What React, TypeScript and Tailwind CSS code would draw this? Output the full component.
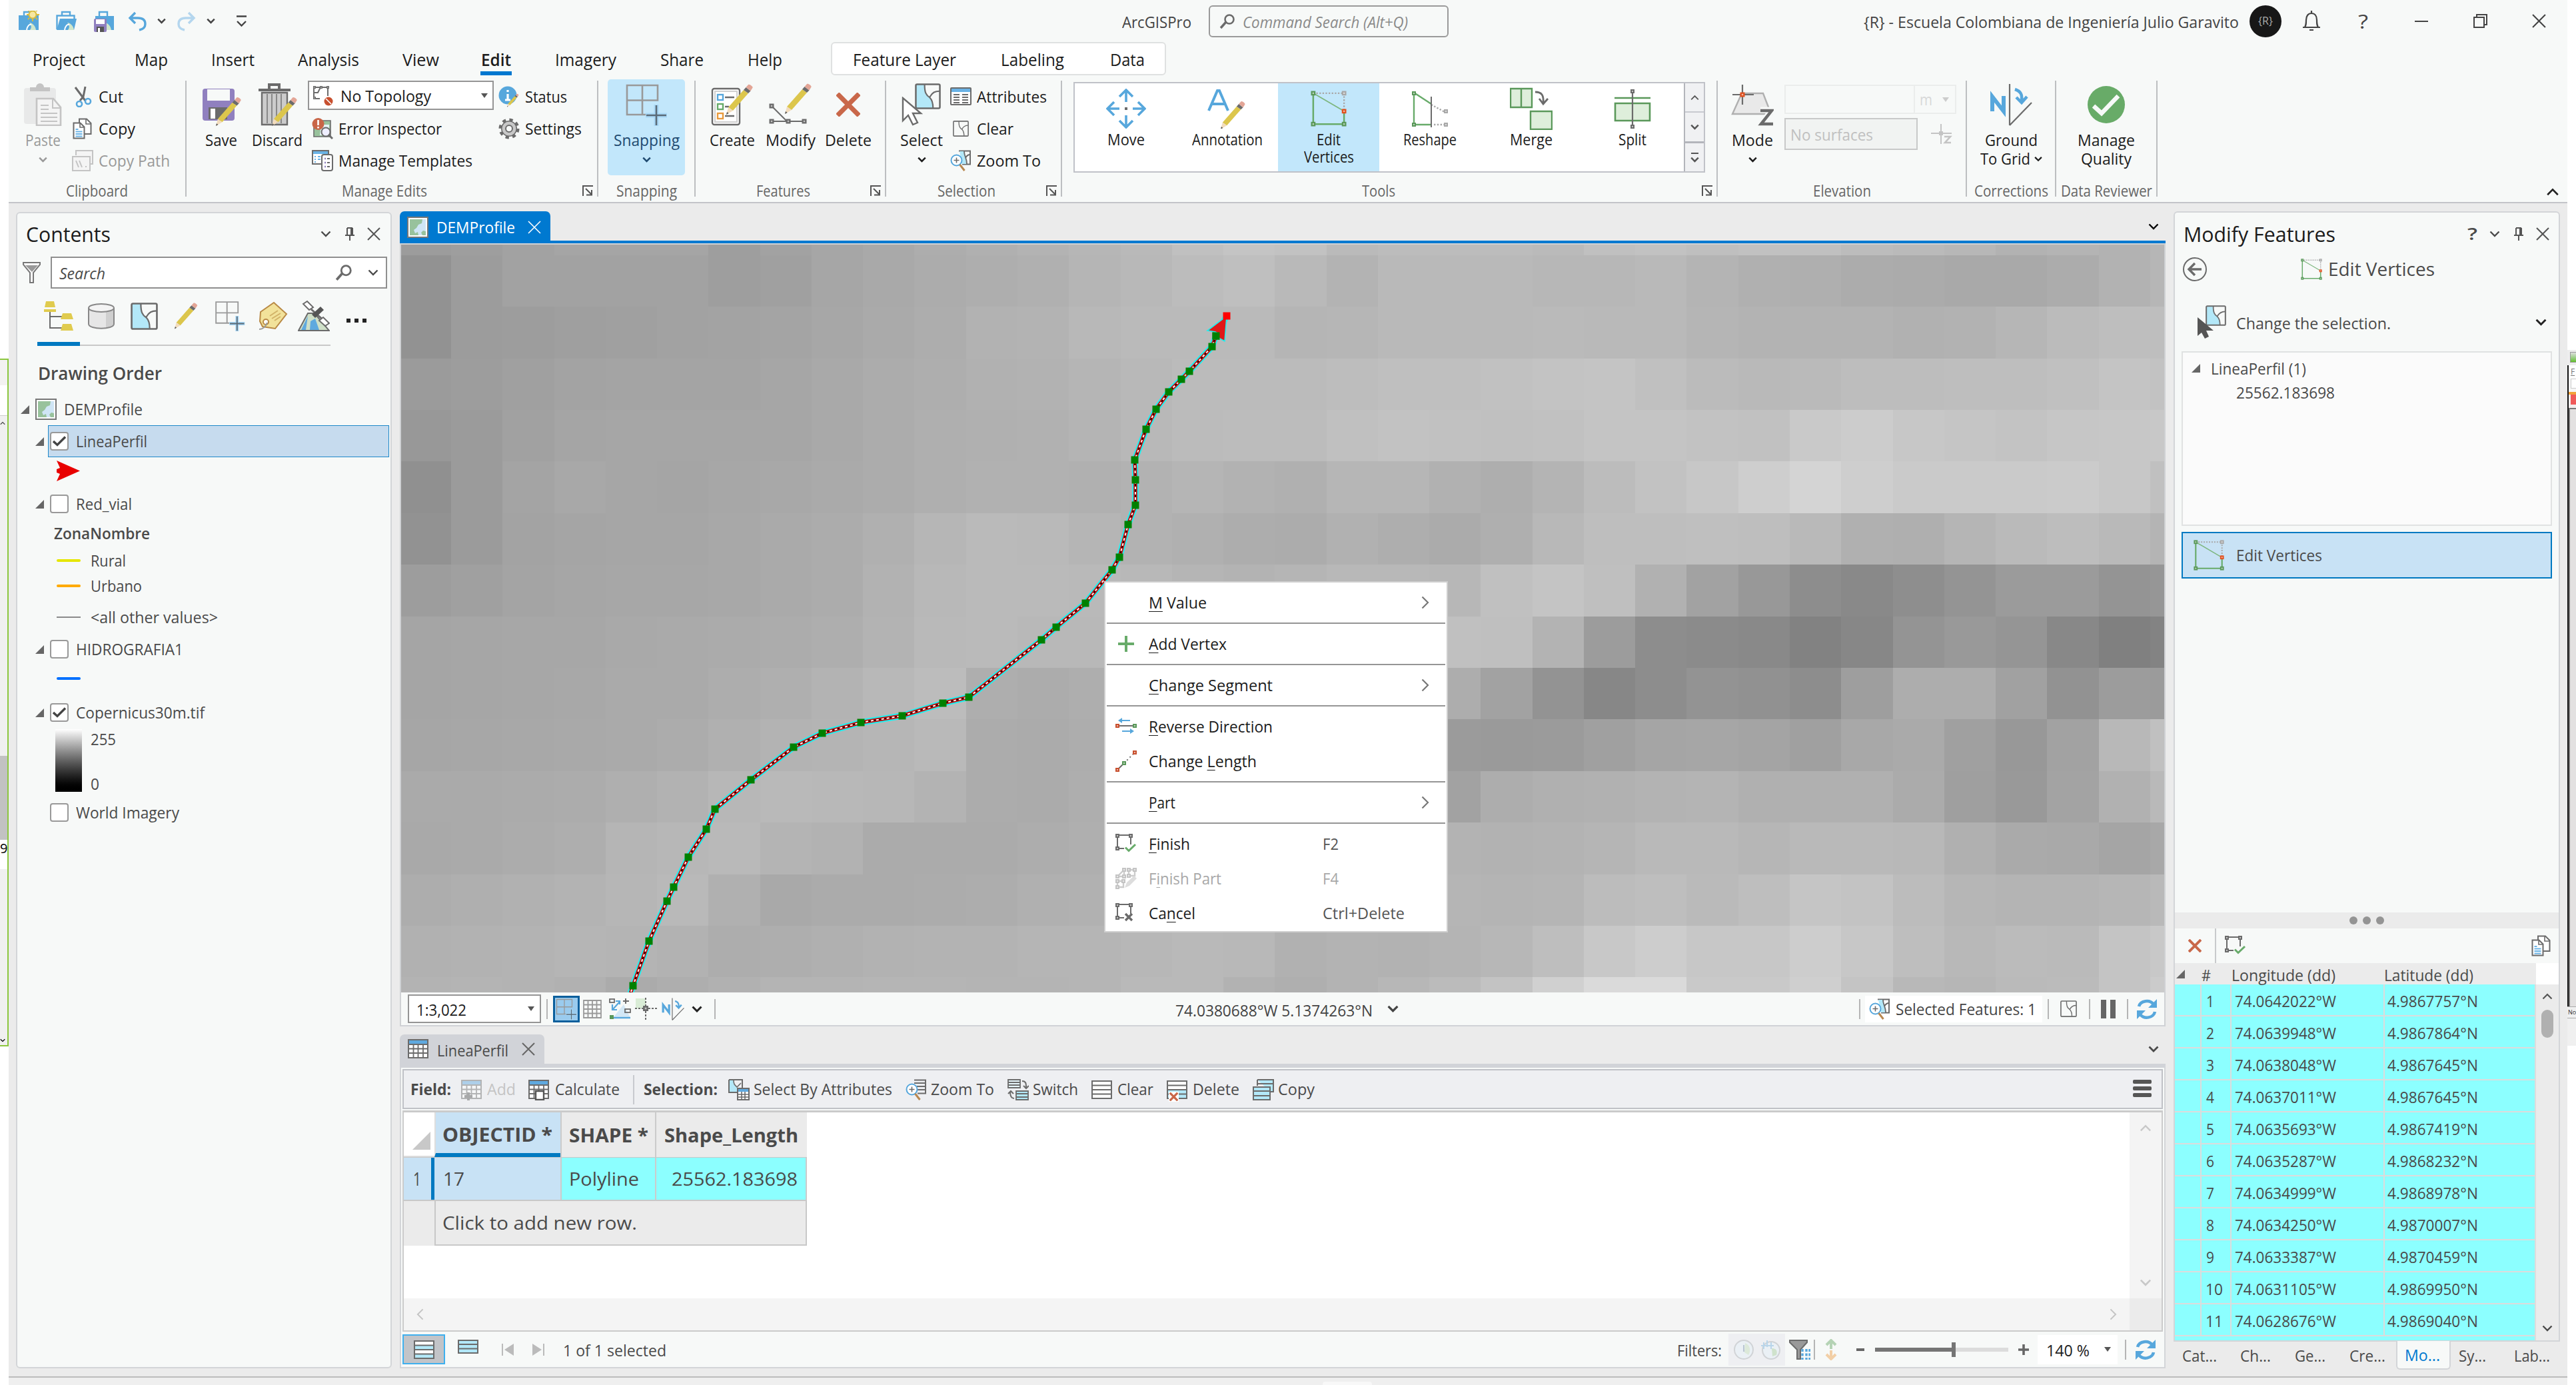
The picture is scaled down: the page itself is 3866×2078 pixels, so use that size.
import React, { useLayoutEffect, useRef } from "react";

type Kids = { children?: React.ReactNode };

/* Text fitted horizontally to the width given by its class. */
function T({ c, children }: { c: string } & Kids) {
  const outer = useRef<HTMLSpanElement>(null);
  const inner = useRef<HTMLSpanElement>(null);
  useLayoutEffect(() => {
    const o = outer.current, i = inner.current;
    if (!o || !i) return;
    i.style.transform = "none";
    const w = i.getBoundingClientRect().width;
    if (w > 0) i.style.transform = `scaleX(${o.clientWidth / w})`;
  });
  return (
    <span ref={outer} className={"inline-block shrink-0 whitespace-nowrap " + c}>
      <span ref={inner} className="inline-block origin-left">{children}</span>
    </span>
  );
}

function Svg({ c = "size-8", vb = "0 0 32 32", children }: { c?: string; vb?: string } & Kids) {
  return <svg className={"block shrink-0 " + c} viewBox={vb} fill="none">{children}</svg>;
}

/* ---------- glyphs ---------- */
const G = "#6b6b6b";
const Chev = ({ c = "w-3 h-2 text-[#555]", w = 2.4 }: { c?: string; w?: number }) => (
  <svg className={"block shrink-0 " + c} viewBox="0 0 16 10" fill="none"><path d="M1.5 1.5 8 8l6.5-6.5" stroke="currentColor" strokeWidth={w} /></svg>
);
const ChevUp = ({ c }: { c: string }) => (
  <svg className={"block shrink-0 " + c} viewBox="0 0 16 10" fill="none"><path d="M1.5 8.5 8 2l6.5 6.5" stroke="currentColor" strokeWidth="2.2" /></svg>
);
const ChevR = ({ c }: { c: string }) => (
  <svg className={"block shrink-0 " + c} viewBox="0 0 12 20" fill="none"><path d="M1.5 1.5 10 10l-8.500 8.500" stroke="currentColor" strokeWidth="2.2" /></svg>
);
const Tri = ({ c = "w-[10px] h-[7px] text-[#555]" }: { c?: string }) => (
  <svg className={"block shrink-0 " + c} viewBox="0 0 10 7"><path d="M0 0h10L5 7z" fill="currentColor" /></svg>
);
const Close = ({ c = "size-5 text-[#555]", w = 2 }: { c?: string; w?: number }) => (
  <svg className={"block shrink-0 " + c} viewBox="0 0 20 20" fill="none"><path d="M1 1l18 18M19 1 1 19" stroke="currentColor" strokeWidth={w} /></svg>
);
const Pin = () => (
  <Svg c="w-[16px] h-[20px]" vb="0 0 16 20"><path d="M4 1h8M4 1v11M12 1v11M10 1v11M1 12h14M8 12v8" stroke="#555" strokeWidth="2" /></Svg>
);
const Mag = ({ c = "size-6" }: { c?: string }) => (
  <Svg c={c} vb="0 0 24 24"><circle cx="15" cy="9" r="6.500" stroke={G} strokeWidth="2.600" /><path d="M10 13 2 22" stroke={G} strokeWidth="3.400" /></Svg>
);
const Launcher = () => (
  <Svg c="size-4" vb="0 0 16 16"><path d="M1 16V1h15M5 5l9 9M14 7v7.500H6" stroke="#555" strokeWidth="2" /></Svg>
);
const Pencil = ({ x = 0, y = 0, s = 1 }: { x?: number; y?: number; s?: number }) => (
  <g transform={`translate(${x} ${y}) scale(${s})`}>
    <path d="M3 29 26 3l7 5L10 34z" fill="#dcc64c" />
    <path d="M26 3l3.500-4 7 5.500L33 8z" fill="#6b6b6b" />
    <path d="M29.500-1 33-5c1.500-1.600 7.500 2.800 6.500 4.600L36.500 4.500z" fill="#e3a596" />
    <path d="M3 29 0 40l10-6z" fill="#f2dcbd" /><path d="M1 36 0 40l3.600-2z" fill="#555" />
  </g>
);
const Node = ({ x, y, f = "#5a985a", s = 8 }: { x: number; y: number; f?: string; s?: number }) => (
  <g><rect x={x - s / 2} y={y - s / 2} width={s} height={s} fill={f} /><rect x={x - s / 6} y={y - s / 6} width={s / 3} height={s / 3} fill="#fff" opacity=".6" /></g>
);
const EditVerticesIcon = ({ c = "size-14" }: { c?: string }) => (
  <Svg c={c} vb="0 0 56 56">
    <path d="M4 4h48v28" stroke="#a8a8a8" strokeWidth="2.400" strokeDasharray="2.400 2.400" />
    <path d="M4 4v48h48V32" stroke="#68ab6a" strokeWidth="2.600" /><path d="M4 4l48 28" stroke="#7db67e" strokeWidth="1.800" />
    <Node x={4} y={4} s={7} /><Node x={52} y={4} f="#a8a8a8" s={7} /><Node x={4} y={52} s={7} /><Node x={52} y={52} s={7} /><Node x={52} y={32} f="#e2501f" s={7} />
  </Svg>
);
const LayerBox = ({ c = "size-8", fill = true }: { c?: string; fill?: boolean }) => (
  <Svg c={c} vb="0 0 40 40">
    {fill && <path d="M2 2h13c0 12 2 16 8 20 4 4 5 9 5 16H2z" fill="#b3e8f8" />}
    <rect x="1.500" y="1.500" width="37" height="37" rx="2" stroke={G} strokeWidth="2.600" />
    <path d="M15 2c0 12 2 16 8 20 4 4 5 9 5 16M23 21c4-7 8-9 15-9" stroke={G} strokeWidth="2.200" />
  </Svg>
);
const ZoomLayer = ({ rows = false }: { rows?: boolean }) => (
  <Svg>
    <path d="M13 1.500h17v20H18" stroke={G} strokeWidth="2" />
    {rows ? <path d="M13 6h17M17 11h13M18 16h12" stroke={G} strokeWidth="2" /> : <><path d="M14 2h7c0 8 3 10 3 19h-6z" fill="#b3e8f8" /><path d="M21 2c0 8 4 10 4 19M23 12c2-4 4-5 7-5" stroke={G} strokeWidth="1.800" /></>}
    <circle cx="9.500" cy="15.500" r="8" fill="#fff" stroke="#57a7dc" strokeWidth="2" />
    <path d="M9.500 11.500v8M5.500 15.500h8" stroke={G} strokeWidth="1.600" /><path d="M14.500 22l7 9" stroke="#b98850" strokeWidth="3" />
  </Svg>
);
const SnapIcon = ({ c }: { c: string }) => (
  <Svg c={c} vb="0 0 64 64">
    <path d="M3 3h46v22.500H3zM26 3v44M3 25v22h28" stroke="#999" strokeWidth="2.600" />
    <path d="M47 32v32M31 48h32" stroke="#a9d8f6" strokeWidth="7" /><path d="M47 33v30M32 48h30" stroke="#5b6b78" strokeWidth="2.600" />
  </Svg>
);
const CopyIcon = () => (
  <Svg>
    <path d="M11 9V1.500h11l6.500 6.500v16H19" fill="#fff" stroke={G} strokeWidth="2" /><path d="M21 2v7h7" stroke={G} strokeWidth="1.600" />
    <path d="M2.500 7.500h10l6 6v17h-16z" fill="#fff" stroke={G} strokeWidth="2" /><path d="M12 8v6h6" stroke={G} strokeWidth="1.600" />
    <path d="M5.500 17h4M5.500 20.500h10M5.500 24h10M5.500 27.500h10" stroke="#6ab3e6" strokeWidth="2" />
  </Svg>
);
const MapThumb = () => (
  <Svg c="size-8"><rect x="1" y="1" width="30" height="30" fill="#fff" stroke="#777" strokeWidth="2" /><path d="M4 4h24v24H4z" fill="#98c29c" /><path d="M23 4h5v18l-4-1-3 3 2 4h-6l-1-5-4 2-2-5 4-3 3-5 5-2z" fill="#cfe5f5" /></Svg>
);
const FinishIcon = ({ x = false, c = "size-8" }: { x?: boolean; c?: string }) => (
  <Svg c={c}>
    <path d="M3 3h20v14M3 3v20h10" stroke={G} strokeWidth="2" />
    <Node x={3} y={4} f={G} s={6} /><Node x={23} y={4} f={G} s={6} /><Node x={3} y={23} f={G} s={6} />
    {x ? <path d="M15 17l10 10M25 17 15 27" stroke={G} strokeWidth="3.400" /> : <path d="M15 21.500l5 5 10-9.500" stroke="#68ab6a" strokeWidth="3" />}
  </Svg>
);
const Refresh = () => (
  <Svg>
    <path d="M4 12A12 10 0 0 1 26 9M28 20A12 10 0 0 1 6 24" stroke="#57a7dc" strokeWidth="4.500" />
    <path d="M31 1v13H18zM1 31V18h13z" fill="#57a7dc" />
  </Svg>
);
const NArrow = ({ c = "size-8" }: { c?: string }) => (
  <Svg c={c} vb="0 0 64 64">
    <path d="M30 1v62M30 63 63 29" stroke={G} strokeWidth="2.200" />
    <path d="M4 42V20h0l17 22V19" stroke="#57a7dc" strokeWidth="6" /><path d="M38 9c9 3 11 8 10 17M40 21l8 8 8-9" stroke="#57a7dc" strokeWidth="4.500" />
  </Svg>
);
const TableRows = ({ sel = [] as number[], c = "w-[31px] h-[28px]" }) => (
  <Svg c={c} vb="0 0 31 28">
    <rect x="1" y="1" width="29" height="26" fill="#fff" />
    {sel.map((r) => <rect key={r} x="1" y={1 + r * 6.500} width="29" height="6.500" fill="#b3e8f8" />)}
    <path d="M1 7.500h29M1 14h29M1 20.500h29" stroke={G} strokeWidth="1.800" /><rect x="1" y="1" width="29" height="26" stroke={G} strokeWidth="2" />
  </Svg>
);
const GridTable = ({ extra }: Kids & { extra?: React.ReactNode }) => (
  <Svg>
    <rect x="1" y="3" width="29" height="26" fill="#fff" /><rect x="1" y="2" width="29" height="7" fill="#5fa9df" />
    <path d="M1 9h29M1 15.500h29M1 22h29M8.500 9v20M15.500 9v20M23 9v20" stroke={G} strokeWidth="1.800" /><rect x="1" y="2" width="29" height="27" stroke={G} strokeWidth="2" />{extra}
  </Svg>
);

/* ---------- title bar ---------- */
const Proj = ({ k }: { k: number }) => (
  <Svg>
    <path d="M9 8V2h12v6" stroke="#57a7dc" strokeWidth="2.400" />
    {k === 0 && <path d="M1 7h30v22H1z" fill="#57a7dc" />}
    {k === 1 && <><path d="M1.500 28V7.500h26V13" stroke="#57a7dc" strokeWidth="2.400" /><path d="M6 12h25l-4 17H1z" fill="#57a7dc" /></>}
    {k === 2 && <path d="M3 8h28v21H3z" fill="#57a7dc" />}
    <path d="M17 18c4 0 9 4 10 11h-9c3-4 2-7-1-11z" fill="#cfe6cb" /><path d="M13 29c1-6 4-9 7-8" stroke="#fff" strokeWidth="2" />
    {k === 0 && <><circle cx="22" cy="6" r="5.500" fill="#f7e7a0" stroke="#d9bc3c" strokeWidth="2" /><path d="M22-2v3M22 12v4M13 6h3M28 6h4M15-1l2 2M27 11l2 2M29-1l-2 2M15 13l2-2" stroke="#d9bc3c" strokeWidth="2" /></>}
    {k === 2 && <><rect x="1" y="12" width="19" height="20" rx="2" fill="#9080bf" /><path d="M4 13h13v7H4z" fill="#fff" /><path d="M5 24h11v8H5z" fill="#555" /><path d="M7 26h3v6H7z" fill="#fff" /></>}
  </Svg>
);
const Undo = ({ c, flip }: { c: string; flip?: boolean }) => (
  <svg className={"block shrink-0 w-[30px] h-[30px] " + c + (flip ? " -scale-x-100" : "")} viewBox="0 0 30 30" fill="none"><path d="M11 2 3 10l8 8M4 10h11c8 0 11 4 11 9s-4 8-9 9" stroke="currentColor" strokeWidth="3.400" /></svg>
);

function TitleBar() {
  return (
    <div className="flex h-[62px] items-center pt-px text-[25px] text-[#444]">
      <div className="ml-[14px]"><Proj k={0} /></div>
      <div className="ml-[25px]"><Proj k={1} /></div>
      <div className="ml-[24px]"><Proj k={2} /></div>
      <div className="ml-[20px]"><Undo c="text-[#57a7dc]" /></div>
      <div className="ml-[14px]"><Chev c="w-[13px] h-[9px] text-[#444]" w={3} /></div>
      <div className="ml-[15px]"><Undo c="text-[#b4d6ee]" flip /></div>
      <div className="ml-[16px]"><Chev c="w-[13px] h-[9px] text-[#444]" w={3} /></div>
      <Svg c="ml-[32px] w-[15px] h-[18px]" vb="0 0 15 18"><path d="M0 1.500h15M1 9l6.500 6.500L14 9" stroke="#444" strokeWidth="2.400" /></Svg>
      <T c="ml-[1314px] w-[104px] pt-[2px] text-[24px]">ArcGISPro</T>
      <div className="ml-[26px] flex h-[48px] w-[360px] shrink-0 items-center rounded-[6px] border-2 border-[#9a9a9a]">
        <div className="ml-[14px]"><Mag c="w-6 h-6" /></div>
        <T c="ml-[11px] w-[248px] pt-[2px] text-[24px] italic text-[#8a8a8a]">Command Search (Alt+Q)</T>
      </div>
      <T c="ml-[623px] w-[563px] pt-[2px] text-[24px]">{"{R} - Escuela Colombiana de Ingeniería Julio Garavito"}</T>
      <div className="ml-[16px] flex size-12 shrink-0 items-center justify-center rounded-full bg-[#171717] text-[16px] text-[#aaa]">{"{R}"}</div>
      <Svg c="ml-[30px] w-[30px] h-[34px]" vb="0 0 30 34"><path d="M2 26h26M5 26c2-4 2-5 2-11 0-6 3-10 8-10s8 4 8 10c0 6 0 7 2 11M15 5V1M12 30h6" stroke="#444" strokeWidth="2.200" /></Svg>
      <T c="ml-[55px] w-[15px] text-[30px]">?</T>
      <div className="ml-[70px] h-[2px] w-[20px] bg-[#444]" />
      <Svg c="ml-[68px] size-[21px]" vb="0 0 21 21"><path d="M5 5V1h15v15h-4M1 5h15v15H1z" stroke="#444" strokeWidth="2" /></Svg>
      <div className="ml-[67px]"><Close c="size-[21px] text-[#444]" /></div>
    </div>
  );
}

function Tabs() {
  return (
    <div className="flex h-[52px] items-center text-[26px] text-[#1c1c1c]">
      <T c="ml-[36px] w-[79px] pt-[4px]">Project</T>
      <T c="ml-[74px] w-[50px] pt-[4px]">Map</T>
      <T c="ml-[65px] w-[65px] pt-[4px]">Insert</T>
      <T c="ml-[65px] w-[92px] pt-[4px]">Analysis</T>
      <T c="ml-[65px] w-[55px] pt-[4px]">View</T>
      <div className="relative ml-[62px] flex h-full w-[47px] shrink-0 items-center">
        <T c="ml-[1px] w-[45px] pt-[4px] font-semibold">Edit</T>
        <div className="absolute bottom-[1px] left-0 h-[6px] w-[47px] bg-[#0078d0]" />
      </div>
      <T c="ml-[65px] w-[92px] pt-[4px]">Imagery</T>
      <T c="ml-[66px] w-[65px] pt-[4px]">Share</T>
      <T c="ml-[66px] w-[52px] pt-[4px]">Help</T>
      <div className="ml-[73px] flex h-[50px] w-[503px] shrink-0 items-center rounded-[6px] border-2 border-[#dfe1e1] bg-white">
        <T c="ml-[31px] w-[155px] pt-[4px]">Feature Layer</T>
        <T c="ml-[67px] w-[95px] pt-[4px]">Labeling</T>
        <T c="ml-[69px] w-[52px] pt-[4px]">Data</T>
      </div>
    </div>
  );
}

/* ---------- ribbon ---------- */
function Group({ c, label, lc, launcher = true, children }: { c: string; label: string; lc: string; launcher?: boolean } & Kids) {
  return (
    <div className={"flex shrink-0 flex-col " + c}>
      <div className="flex h-[154px] items-start">{children}</div>
      <div className="flex h-[34px] items-center">
        <div className="flex flex-1 justify-center pt-[2px] text-[#666]"><T c={lc}>{label}</T></div>
        {launcher && <div className="mr-[6px] pt-[2px]"><Launcher /></div>}
      </div>
    </div>
  );
}
const Sep = () => <div className="mt-[7px] h-[174px] w-[2px] shrink-0 bg-[#bdbfc1]" />;
function Big({ c, icon, lc, label, chev, extra }: { c: string; icon: React.ReactNode; lc: string; label: string; chev?: boolean; extra?: React.ReactNode }) {
  return (
    <div className={"mt-[5px] flex h-[144px] shrink-0 flex-col items-center pt-[6px] " + c}>
      <div className="flex h-16 items-center justify-center">{icon}</div>
      <div className="mt-[5px] flex h-[32px] items-center"><T c={lc}>{label}</T></div>
      {chev && <div className="mt-[9px]"><Chev c="w-[13px] h-[9px]" w={3} /></div>}
      {extra}
    </div>
  );
}
function Small({ icon, tc, label, c = "" }: { icon: React.ReactNode; tc: string; label: string; c?: string }) {
  return <div className={"flex h-[48px] items-center " + c}><div className="flex w-8 shrink-0 justify-center">{icon}</div><T c={"ml-[8px] " + tc}>{label}</T></div>;
}
function Tool({ icon, lines, on, w }: { icon: React.ReactNode; lines: string[]; w: string[]; on?: boolean }) {
  return (
    <div className={"flex w-[152px] shrink-0 flex-col items-center pt-[6px] " + (on ? "bg-[#c2e7fb]" : "")}>
      <div className="flex h-16 items-center justify-center">{icon}</div>
      <div className="flex flex-col items-center pt-[2px]">
        {lines.map((l, i) => <div key={l} className="flex h-[26px] items-center"><T c={w[i]}>{l}</T></div>)}
      </div>
    </div>
  );
}

function Ribbon() {
  return (
    <div className="flex h-[189px] text-[24px] text-[#1c1c1c]">
      <Group c="w-[265px]" label="Clipboard" lc="w-[93px]" launcher={false}>
        <Big c="ml-[19px] w-[64px] text-[#999]" lc="w-[53px]" label="Paste" chev icon={
          <Svg c="w-[58px] h-16" vb="0 0 58 64"><rect x="1" y="7" width="48" height="54" rx="4" fill="#e8e9e9" /><path d="M10 12V6h9a6 6 0 0 1 12 0h9v6z" fill="#c4c4c4" /><path d="M20 23h25l11 13v27H20z" fill="#f4f4f4" stroke="#c4c4c4" strokeWidth="2.600" /><path d="M44 23v14h12M26 33h12M26 39h12M26 45h25M26 51h25M26 57h25" stroke="#c4c4c4" strokeWidth="2" /></Svg>} />
        <div className="ml-[12px] mt-[7px] flex flex-col">
          <Small tc="w-[37px]" label="Cut" icon={<Svg><path d="M5 2l15 20M20 1l-3 15-5 6" stroke={G} strokeWidth="3" /><circle cx="24" cy="23" r="4" stroke="#57a7dc" strokeWidth="2.600" /><circle cx="11" cy="27" r="4" stroke="#57a7dc" strokeWidth="2.600" /></Svg>} />
          <Small tc="w-[55px]" label="Copy" icon={<CopyIcon />} />
          <Small c="text-[#999]" tc="w-[107px]" label="Copy Path" icon={<Svg><path d="M6 8V1h25v20h-3" fill="#f4f4f4" stroke="#c4c4c4" strokeWidth="2" /><rect x="1" y="10" width="26" height="21" fill="#f4f4f4" stroke="#c4c4c4" strokeWidth="2" /><path d="M6 16l4 10M11 16l4 10M20 25h2" stroke="#c4c4c4" strokeWidth="2" /></Svg>} />
        </div>
      </Group>
      <Sep />
      <Group c="w-[616px]" label="Manage Edits" lc="w-[128px]">
        <Big c="ml-[20px] w-[64px]" lc="w-[48px]" label="Save" icon={
          <Svg c="size-16" vb="0 0 64 64"><rect x="4" y="8" width="48" height="48" rx="4" fill="#9080bf" /><path d="M11 9h34v17H11z" fill="#f7f9f8" /><path d="M13 36h28v18H13z" fill="#6b6b6b" /><path d="M16 38h7v15h-7z" fill="#fff" /><Pencil x={24} y={26} s={0.95} /></Svg>} />
        <Big c="ml-[12px] w-[80px]" lc="w-[76px]" label="Discard" icon={
          <Svg c="size-16" vb="0 0 64 64"><path d="M4 10h48M20 9V2h15v7" stroke="#6b6b6b" strokeWidth="4" /><path d="M9 14h38v48H9z" fill="#ccc" stroke="#6b6b6b" strokeWidth="2.400" /><path d="M17 16v44M24 16v44M31 16v44M38 16v44" stroke="#888" strokeWidth="2" /><Pencil x={24} y={26} s={0.95} /></Svg>} />
        <div className="ml-[6px] mt-[7px] flex shrink-0 flex-col">
          <div className="flex h-[48px] items-start">
            <div className="flex h-[44px] w-[279px] items-center border-[2px] border-[#959595] bg-white">
              <div className="ml-[5px]"><Svg><path d="M2 4h21M2 4v17h9M2 12h6l4-8M23 4v13" stroke={G} strokeWidth="2" /><Node x={3} y={4} f={G} s={4} /><Node x={13} y={4} f={G} s={4} /><Node x={23} y={4} f={G} s={4} /><Node x={3} y={20} f={G} s={4} /><circle cx="24" cy="25" r="6.500" fill="#c8502f" /><path d="M20 21l8 8" stroke="#fff" strokeWidth="1.600" /></Svg></div>
              <T c="ml-[10px] w-[136px] pt-[2px]">No Topology</T>
              <div className="ml-[75px]"><Tri /></div>
            </div>
          </div>
          <Small c="ml-[6px]" tc="w-[155px]" label="Error Inspector" icon={<Svg><path d="M6 4h22v24H3V14z" fill="#98c29c" stroke={G} strokeWidth="1.600" /><path d="M14 10h12v16H12z" fill="#e5f2f5" /><circle cx="9.500" cy="9" r="9" fill="#c86547" /><path d="M9.500 3v8M9.500 13v2.500" stroke="#fff" strokeWidth="2.600" /><circle cx="21" cy="21" r="6.500" fill="#eef" stroke={G} strokeWidth="2" /><path d="M25 25l6 6" stroke={G} strokeWidth="3" /></Svg>} />
          <Small c="ml-[6px]" tc="w-[201px]" label="Manage Templates" icon={<Svg><path d="M1 1h24v20H1z" fill="#fff" stroke={G} strokeWidth="2" /><path d="M2 2h22v4H2z" fill="#6ab3e6" /><path d="M4 10h2M4 14h2M4 18h2M9 10h4M9 14h4" stroke="#6ab3e6" strokeWidth="2" /><rect x="15" y="7" width="16" height="24" rx="3" fill="#fff" stroke={G} strokeWidth="2" /><path d="M19 13h2M19 19h2M19 25h2" stroke="#9080bf" strokeWidth="2.600" /><path d="M23 13h4M23 19h4M23 25h4" stroke={G} strokeWidth="2" /></Svg>} />
        </div>
        <div className="ml-[7px] mt-[7px] flex shrink-0 flex-col">
          <Small tc="w-[63px]" label="Status" icon={<Svg><circle cx="14" cy="14" r="13.500" fill="#57a7dc" /><path d="M14 6v3M14 12v10M10 21h8" stroke="#fff" strokeWidth="3.200" /><Pencil x={13} y={14} s={0.44} /></Svg>} />
          <Small tc="w-[85px]" label="Settings" icon={<Svg><circle cx="16" cy="16" r="8" stroke={G} strokeWidth="2" /><circle cx="16" cy="16" r="12.500" stroke={G} strokeWidth="6" strokeDasharray="4.900 4.920" /><circle cx="16" cy="16" r="11" stroke={G} strokeWidth="2" /><circle cx="16" cy="16" r="8" stroke="#c8c8c8" strokeWidth="5" /><circle cx="16" cy="16" r="5" fill="#f7f9f8" stroke={G} strokeWidth="2" /></Svg>} />
        </div>
      </Group>
      <Sep />
      <Group c="w-[144px]" label="Snapping" lc="w-[91px]" launcher={false}>
        <Big c="ml-[14px] w-[116px] rounded-[5px] bg-[#c2e7fb] text-[#1f4a70]" lc="w-[99px]" label="Snapping" chev icon={<SnapIcon c="size-16" />} />
      </Group>
      <Sep />
      <Group c="w-[284px]" label="Features" lc="w-[81px]">
        <Big c="ml-[19px] w-[72px]" lc="w-[68px]" label="Create" icon={
          <Svg c="size-16" vb="0 0 64 64"><rect x="2" y="8" width="41" height="54" rx="3" fill="#fff" stroke={G} strokeWidth="2.400" /><path d="M6 12h33v46H6z" stroke="#d0d0d0" strokeWidth="2" /><rect x="10" y="17" width="8" height="8" stroke="#57a7dc" strokeWidth="2.400" /><rect x="10" y="31" width="8" height="8" stroke="#68ab6a" strokeWidth="2.400" /><rect x="10" y="45" width="8" height="8" stroke="#e89a3c" strokeWidth="2.400" /><path d="M21 21h14M21 35h6M21 49h14" stroke={G} strokeWidth="2.400" /><Pencil x={23} y={7} /></Svg>} />
        <Big c="ml-[13px] w-[76px]" lc="w-[75px]" label="Modify" icon={
          <Svg c="size-16" vb="0 0 64 64"><path d="M4 34l24 24M4 57h52" stroke={G} strokeWidth="2" /><Node x={4} y={34} f={G} s={7} /><Node x={4} y={57} f={G} s={7} /><Node x={29} y={57} f={G} s={7} /><Node x={53} y={57} f={G} s={7} /><Pencil x={24} y={6} /></Svg>} />
        <Big c="ml-[14px] w-[70px]" lc="w-[70px]" label="Delete" icon={<Close c="size-[36px] text-[#c9684a]" w={4} />} />
      </Group>
      <Sep />
      <Group c="w-[262px]" label="Selection" lc="w-[87px]">
        <Big c="ml-[20px] w-[66px]" lc="w-[64px]" label="Select" chev icon={
          <div className="relative h-16 w-[60px]"><div className="ml-[20px]"><LayerBox c="size-[39px]" /></div><Svg c="absolute left-0 top-[20px] w-[32px] h-[44px]" vb="0 0 32 44"><path d="M2 2v34l8-8 7 14 7-3-7-14h12z" fill="#fff" stroke={G} strokeWidth="2.400" /></Svg></div>} />
        <div className="ml-[10px] mt-[7px] flex shrink-0 flex-col">
          <Small tc="w-[105px]" label="Attributes" icon={<Svg><rect x="1" y="3" width="30" height="25" rx="1" fill="#fff" stroke={G} strokeWidth="2" /><path d="M2 4h28v5H2z" fill="#6ab3e6" /><path d="M5 13h9M5 17h9M5 21h9M5 25h9M18 13h9M18 17h9M18 21h9M18 25h9" stroke={G} strokeWidth="1.800" /></Svg>} />
          <Small tc="w-[55px]" label="Clear" icon={<LayerBox c="size-[24px]" fill={false} />} />
          <Small tc="w-[96px]" label="Zoom To" icon={<ZoomLayer />} />
        </div>
      </Group>
      <Sep />
      <Group c="w-[982px]" label="Tools" lc="mr-[10px] w-[50px]">
        <div className="ml-[17px] mt-[9px] flex h-[136px] w-[948px] shrink-0 border-2 border-[#c0c2c8] bg-white pl-px text-[23px]">
          <Tool lines={["Move"]} w={["w-[56px]"]} icon={<Svg c="size-[60px]" vb="0 0 60 60"><path d="M30 2v18M30 40v18M2 30h18M40 30h18M20 12 30 2l10 10M20 48l10 10 10-10M12 20 2 30l10 10M48 20l10 10-10 10" stroke="#57a7dc" strokeWidth="3.600" /><path d="M28 28h4v4h-4z" fill={G} /></Svg>} />
          <Tool lines={["Annotation"]} w={["w-[106px]"]} icon={<Svg c="size-[60px]" vb="0 0 60 60"><path d="M2 33 15 3h3l13 30M7 23h19" stroke="#57a7dc" strokeWidth="4" /><Pencil x={20} y={24} s={0.92} /></Svg>} />
          <Tool on lines={["Edit", "Vertices"]} w={["w-[36px]", "w-[75px]"]} icon={<EditVerticesIcon c="size-[54px]" />} />
          <Tool lines={["Reshape"]} w={["w-[80px]"]} icon={<Svg c="w-[56px] h-[56px]" vb="0 0 56 56"><path d="M4 52V4l26 17M4 52h26" stroke="#68ab6a" strokeWidth="2.400" /><path d="M30 22l22 12M34 52h18" stroke="#a8a8a8" strokeWidth="2.400" strokeDasharray="2.400 2.400" /><path d="M30 10v50" stroke={G} strokeWidth="2" /><Node x={4} y={5} s={6} /><Node x={4} y={52} s={6} /><Node x={52} y={32} f="#a8a8a8" s={6} /><Node x={52} y={52} f="#a8a8a8" s={6} /></Svg>} />
          <Tool lines={["Merge"]} w={["w-[64px]"]} icon={<Svg c="size-16" vb="0 0 64 64"><path d="M1 2h32v28H1zM17 2v28M31 36h32v27H31z" fill="#deeedb" stroke="#5a985a" strokeWidth="2.400" /><path d="M38 7c10 0 13 5 12 17M44 17l6 8 7-8" stroke={G} strokeWidth="2.800" /></Svg>} />
          <Tool lines={["Split"]} w={["w-[42px]"]} icon={<Svg c="size-[60px]" vb="0 0 60 60"><path d="M3 14h54" stroke="#5a985a" strokeWidth="2.600" /><path d="M4 22h52v26H4z" fill="#deeedb" stroke="#5a985a" strokeWidth="2.600" /><path d="M30 4v52" stroke={G} strokeWidth="2.200" /><Node x={30} y={4} f={G} s={6} /><Node x={30} y={57} f={G} s={6} /></Svg>} />
          <div className="ml-px flex flex-1 flex-col border-l-2 border-[#b3b5bb] bg-[#f0f1f3] text-[#555]">
            <div className="flex h-[44px] items-center justify-center border-b-2 border-[#c8cad0]"><ChevUp c="w-[13px] h-[9px]" /></div>
            <div className="flex h-[46px] items-center justify-center border-b-[3px] border-[#b3b5bb]"><Chev c="w-[13px] h-[9px]" w={3} /></div>
            <div className="flex flex-1 flex-col items-center justify-center gap-[4px]"><div className="h-[2px] w-[11px] bg-[#555]" /><Chev c="w-[13px] h-[9px]" w={3} /></div>
          </div>
        </div>
      </Group>
      <Sep />
      <Group c="w-[372px]" label="Elevation" lc="w-[87px]" launcher={false}>
        <Big c="ml-[20px] w-[64px]" lc="w-[62px]" label="Mode" chev icon={
          <Svg c="size-16" vb="0 0 64 64"><path d="M16 15h32l12 31H2z" fill="#e9e9e9" stroke="#b0b0b0" strokeWidth="2.400" /><path d="M17 2v30M2 17h32" stroke={G} strokeWidth="2.200" /><Node x={17} y={17} f="#e2501f" s={7} /><path d="M44 40h18M61 40 45 62M43 62h19" stroke="#f7f9f8" strokeWidth="9" /><path d="M44 41h17L45 61h18" stroke={G} strokeWidth="4.500" /></Svg>} />
        <div className="ml-[16px] mt-[13px] flex shrink-0 flex-col">
          <div className="flex h-[44px] w-[258px] border-2 border-[#ebedec]">
            <div className="w-[194px] border-r-2 border-[#ebedec]" />
            <div className="flex items-center text-[#d8d8d8]"><T c="ml-[7px] w-[19px]">m</T><div className="ml-[15px]"><Tri c="w-[10px] h-[7px] text-[#ccc]" /></div></div>
          </div>
          <div className="mt-[6px] flex items-center">
            <div className="flex h-[48px] w-[200px] items-center border-2 border-[#c8c9c9] bg-[#f1f3f2] text-[#c0c0c0]"><T c="ml-[7px] w-[124px] pt-[2px]">No surfaces</T></div>
            <Svg c="ml-[20px] size-[32px]"><path d="M15 1v30M0 15h31" stroke="#c4c4c4" strokeWidth="2" /><rect x="12" y="12" width="6" height="6" fill="#c4c4c4" /><path d="M20 20h9l-8 9h9" stroke="#c4c4c4" strokeWidth="2.600" /></Svg>
          </div>
        </div>
      </Group>
      <Sep />
      <Group c="w-[132px]" label="Corrections" lc="w-[111px]" launcher={false}>
        <Big c="ml-[14px] w-[104px]" lc="w-[79px]" label="Ground" icon={<NArrow c="size-16" />} extra={<div className="-mt-[4px] flex h-[32px] items-center"><T c="w-[75px]">To Grid</T><div className="ml-[6px]"><Chev c="w-[12px] h-[9px]" w={3} /></div></div>} />
      </Group>
      <Sep />
      <Group c="w-[150px]" label="Data Reviewer" lc="w-[137px]" launcher={false}>
        <Big c="ml-[15px] w-[120px]" lc="w-[86px]" label="Manage" icon={<Svg c="size-[56px]" vb="0 0 56 56"><circle cx="28" cy="28" r="28" fill="#68ab68" /><path d="M9 30l12 11 25-26" stroke="#f7f9f8" strokeWidth="6.500" /></Svg>} extra={<div className="-mt-[4px] flex h-[32px] items-center"><T c="w-[76px]">Quality</T></div>} />
      </Group>
      <Sep />
      <div className="flex flex-1 items-end justify-end pb-[9px] pr-[12px]"><ChevUp c="w-[20px] h-[12px] text-[#222]" /></div>
    </div>
  );
}

/* ---------- contents pane ---------- */
const Expand = () => <Svg c="size-[13px]" vb="0 0 13 13"><path d="M13 0v13H0z" fill="#666" /></Svg>;
const Check = ({ on }: { on?: boolean }) => (
  <div className="flex size-[28px] shrink-0 items-center justify-center rounded-[4px] border-2 border-[#999] bg-white">
    {on && <Svg c="w-[20px] h-[16px]" vb="0 0 20 16"><path d="M1 8l6 5.500L19 1.500" stroke="#444" strokeWidth="3.400" /></Svg>}
  </div>
);
const Leaf = ({ mt, on, tc, label }: { mt: string; on?: boolean; tc: string; label: string }) => (
  <div className={"flex h-[28px] items-center " + mt}><div className="ml-[27px]"><Expand /></div><div className="ml-[9px]"><Check on={on} /></div><T c={"ml-[11px] " + tc}>{label}</T></div>
);
const Sym = ({ mt, line, tc, label }: { mt: string; line: string; tc: string; label: string }) => (
  <div className={"flex h-[28px] items-center " + mt}><div className={"ml-[59px] w-[36px] shrink-0 " + line} /><T c={"ml-[15px] " + tc}>{label}</T></div>
);

function Contents() {
  return (
    <div className="ml-[11px] mt-[13px] flex h-[1735px] w-[564px] shrink-0 flex-col rounded-[6px] border-2 border-[#d3d5d8] bg-[#f7f9f8] text-[24px] text-[#4a4a4a]">
      <div className="mt-[11px] flex h-[40px] items-center">
        <T c="ml-[13px] w-[127px] text-[31px] text-[#1c1c1c]">Contents</T>
        <div className="ml-[315px]"><Chev c="w-[16px] h-[10px]" /></div>
        <div className="ml-[20px]"><Pin /></div>
        <div className="ml-[18px]"><Close /></div>
      </div>
      <div className="mt-[14px] flex h-[48px] items-center">
        <Svg c="ml-[8px] w-[27px] h-[32px]" vb="0 0 27 32"><path d="M1 1h25v3L16 16v15h-5V16L1 4z" fill="#fff" stroke="#777" strokeWidth="2" /><path d="M4 5h19l-9 10z" fill="#999" /></Svg>
        <div className="ml-[15px] flex h-[48px] w-[505px] items-center border-2 border-[#8f8f8f] bg-white">
          <T c="ml-[11px] w-[69px] pt-[2px] italic">Search</T>
          <div className="ml-[345px]"><Mag c="size-[26px]" /></div>
          <div className="ml-[23px]"><Chev c="w-[16px] h-[10px]" /></div>
        </div>
      </div>
      <div className="mt-[17px] flex h-[48px] items-center">
        <Svg c="ml-[40px] size-[44px]" vb="0 0 44 44"><path d="M9 16v24h18M9 23h18" stroke={G} strokeWidth="2" /><path d="M3 0h12l2 9H1zM0 12h18v4H0zM28 18h13l3 9H25zM28 34h13l3 10H25z" fill="#e0cb4e" /></Svg>
        <Svg c="ml-[21px] size-[42px]" vb="0 0 42 42"><path d="M2 9v24c0 9 38 9 38 0V9" fill="#e6e6e6" /><path d="M28 13h12v21c0 3-6 5-12 6z" fill="#cfcfcf" /><path d="M2 9v24c0 9 38 9 38 0V9" stroke="#888" strokeWidth="2" /><ellipse cx="21" cy="9" rx="19" ry="6" fill="#f4f4f4" stroke="#888" strokeWidth="2" /></Svg>
        <div className="ml-[23px]"><LayerBox c="size-[41px]" /></div>
        <Svg c="ml-[24px] size-[40px]" vb="0 0 40 40"><Pencil x={1} y={5} s={0.86} /></Svg>
        <div className="ml-[21px]"><SnapIcon c="size-[46px]" /></div>
        <Svg c="ml-[20px] size-[44px]" vb="0 0 44 44"><path d="M23 2l19 17-17 22-19-3-4-8 1-14z" fill="#f2e29a" stroke="#b98a45" strokeWidth="2" /><circle cx="11" cy="31" r="4" fill="#fff" stroke="#b98a45" strokeWidth="2" /><path d="M13 32c-3 8-7 10-12 10" stroke="#999" strokeWidth="2" /><path d="M17 22l12-8M20 26l13-8M24 29l9-6" stroke="#d2b268" strokeWidth="2" /></Svg>
        <Svg c="ml-[15px] size-[48px]" vb="0 0 48 48"><path d="M1 46 15 20h10l22 26z" fill="#cfe0c8" stroke={G} strokeWidth="2" /><path d="M5 45 15 24l-3 21zM19 32l7-4 6 17H18z" fill="#5fa9df" /><path d="M20 14l18 16" stroke={G} strokeWidth="3" /><path d="M8 6l6-4 9 9-6 4zM32 31l6-5 9 9-6 4z" fill="#fff" stroke={G} strokeWidth="2" /><path d="M21 22 34 10l5 5-13 12z" fill="#555" /></Svg>
        <div className="ml-[25px] flex gap-[6px] pt-[14px]">{[0, 1, 2].map((i) => <div key={i} className="size-[6px] bg-[#222]" />)}</div>
      </div>
      <div className="mt-[15px] flex h-[6px] items-end"><div className="ml-[30px] h-[6px] w-[64px] bg-[#0079c1]" /><div className="h-[2px] w-[376px] bg-[#c8c8c8]" /></div>
      <T c="ml-[31px] mt-[22px] w-[186px] text-[27px] font-semibold leading-[38px]">Drawing Order</T>
      <div className="mt-[19px] flex h-[32px] items-center"><div className="ml-[5px]"><Expand /></div><div className="ml-[9px]"><MapThumb /></div><T c="ml-[11px] w-[118px]">DEMProfile</T></div>
      <div className="mt-[8px] flex h-[48px] items-center">
        <div className="ml-[27px]"><Expand /></div>
        <div className="ml-[6px] flex h-[48px] w-[512px] items-center border-[1.500px] border-[#1e88c9] bg-[#c6dbee]"><div className="ml-[2px]"><Check on /></div><T c="ml-[11px] w-[107px]">LineaPerfil</T></div>
      </div>
      <Svg c="ml-[59px] mt-[5px] w-[35px] h-[31px]" vb="0 0 35 31"><path d="M0 0 35 15.500 0 31l5-11-5-2v-5l5-2z" fill="#e80000" /></Svg>
      <Leaf mt="mt-[20px]" tc="w-[84px]" label="Red_vial" />
      <T c="ml-[55px] mt-[12px] w-[144px] font-semibold leading-[36px]">ZonaNombre</T>
      <Sym mt="mt-[9px]" line="h-[4px] rounded bg-[#e6e600]" tc="w-[53px]" label="Rural" />
      <Sym mt="mt-[10px]" line="h-[4px] rounded bg-[#ffaa00]" tc="w-[77px]" label="Urbano" />
      <Sym mt="mt-[19px]" line="h-[2px] bg-[#8a8a8a]" tc="w-[191px]" label="<all other values>" />
      <Leaf mt="mt-[20px]" tc="w-[161px]" label="HIDROGRAFIA1" />
      <div className="ml-[59px] mt-[28px] h-[4px] w-[36px] rounded bg-[#0070ff]" />
      <Leaf mt="mt-[35px]" on tc="w-[193px]" label="Copernicus30m.tif" />
      <div className="mt-[11px] flex h-[94px]">
        <div className="ml-[57px] w-[40px] bg-gradient-to-b from-white to-black" />
        <div className="ml-[13px] flex flex-col justify-between leading-[24px]"><T c="mt-[3px] w-[38px]">255</T><T c="w-[13px]">0</T></div>
      </div>
      <div className="mt-[17px] flex h-[28px] items-center"><div className="ml-[49px]"><Check /></div><T c="ml-[11px] w-[155px]">World Imagery</T></div>
    </div>
  );
}

/* ---------- map ---------- */
const DEM = [
  "9c9ea2a5a5a59ea2a6a9adb0b3b6b9c0c4c2babcbcbcbac0c2bfc1c0bcbab7b2b4b2b6",
  "929ca2a2a2a29ea0a6a9acaeb0b5b8bcbfb9b3b9b9b9b7b7b9b4b0afacaba9a9acb2b6",
  "929c9d9fa0a2a3a4a7aaadb2b3b8bababab5b6b9b9b9bab9b9b5b3b3b3b1b2b6bbbebe",
  "9b9da0a3a4a4a4a6a9acaeb1b2b5b8bbbbbbbdbfbfc1c3c4c0bbb9babdbdbebec0c4c2",
  "989ba1a5a6a6a6a6a9acafb0b1b4b8bbbcbcc0c2c1c0c1c4c4c2c1c9ccc7c5c3c6c7c8",
  "909ba4a8a6a5a7a8aaacafb1b1b0b2b5b2b0b6b6b1aeb4bcc2c7ced4cecacacacbc7c0",
  "929ba3a5a6a6a8aaacb0b6bab9b5b2b0adacb1aeabafb8bebebfbeb9b0afb5babdb9b4",
  "9da0a4a6a7a7a8aaacb2b8babab9b8b5b3b5b8b8b7c0c4bfb1a2988d898e949b9b9496",
  "a5a6a7a7a9aaabacaeb3b9bab8b8b8b8b8b8bbbdc0bfb39c8d8b898287949995888083",
  "a5a6a7a8aaaaadafb3b8bcaeacaeb0b0b0b0b0b0ada293878d93918d9eadada1929c9b",
  "a6a7a8a9aaacb0b3b4b6b9acabadb0b0b0b0a89f9b9a9ba0a5a6a4a0a8aaa098a2b8c0",
  "aaaaabacafb2b7b9b8b7b3acabaeb0b2b2b2b0aaa2adb0b1b3b4b0b0b0ab9f99a3b1b9",
  "a9aaacaeb5b7b9b4b2abababadafb1b2b2b2b2b2b3b2b3b5b9b9b6b9b9b8b0aaa9a5a8",
  "adafb1b3b6b9b0a9ababacadb0b1b2b4b4b4b4b5b5b4b5bcbebabec5c3bcb6b4b4b6b9",
  "b1b2b3b5b4b2adaeb0b2b3b3b5b5b7b9b8b1b3b2b4b7bec8cdc7c7cdc7beb8bbbac4c8",
  "b3b4b3b1abaeb1b4b4b5b5b4b4b5b9b9b2afb3b7bbc3d0dadac9c9cfc4b8b6babbc4cb",
];
const LINE: [number, number][] = [
  [1825, 504], [1819, 520], [1785, 557], [1773, 569], [1754, 588], [1735, 614], [1720, 644], [1703, 690], [1704, 720], [1704, 758], [1693, 787], [1680, 836],
  [1669, 855], [1629, 905], [1585, 941], [1563, 960], [1454, 1046], [1415, 1055], [1354, 1074], [1292, 1084], [1234, 1100], [1191, 1121], [1127, 1170],
  [1073, 1214], [1060, 1244], [1033, 1286], [1011, 1331], [1001, 1352], [974, 1412], [950, 1479],
];

function MapCanvas() {
  const pts = "1841,474 " + LINE.map((p) => p.join(",")).join(" ") + " 946,1491";
  return (
    <svg className="block h-[1122px] w-[2646px]" viewBox="602 367 2646 1122">
      <g shapeRendering="crispEdges">
        {DEM.map((row, r) => (row.match(/../g) || []).map((v, k) => {
          const x = k === 0 ? 602 : Math.round(677 + 77.27 * (k - 1));
          const x2 = k === 34 ? 3248 : Math.round(677 + 77.27 * k);
          const y = r === 0 ? 367 : Math.round(382.700 + 77.400 * (r - 1));
          const y2 = r === 15 ? 1489 : Math.round(382.700 + 77.400 * r);
          return <rect key={r + "-" + k} x={x} y={y} width={x2 - x} height={y2 - y} fill={"#" + v + v + v} />;
        }))}
      </g>
      <polyline points={pts} fill="none" stroke="#20f0f0" strokeWidth="9.500" />
      <polyline points={pts} fill="none" stroke="#c01212" strokeWidth="5.500" />
      <polyline points={pts} fill="none" stroke="#200" strokeWidth="1.800" strokeDasharray="4 4" />
      <polyline points={pts} fill="none" stroke="#fff" strokeWidth="1.800" strokeDasharray="4 4" strokeDashoffset="4" />
      {LINE.map(([x, y]) => <rect key={x + "," + y} x={x - 5.500} y={y - 5.500} width="11" height="11" fill="#008000" />)}
      <path d="M1841 474 1812 496l12 2 5 3 0 6 9 5z" fill="#e01818" stroke="#20f0f0" strokeWidth="1.600" />
      <rect x="1819.500" y="498.500" width="11" height="11" fill="#008000" />
      <rect x="1835.500" y="468.500" width="11" height="11" fill="#f00" />
    </svg>
  );
}

function Item({ icon, children, tc, keys, kc, arrow, off }: { icon?: React.ReactNode; tc: string; keys?: string; kc?: string; arrow?: boolean; off?: boolean } & Kids) {
  return (
    <div className={"flex h-[52px] items-center " + (off ? "text-[#a8a8a8]" : "text-[#1c1c1c]")}>
      <div className="ml-[15px] flex w-8 shrink-0 justify-center">{icon}</div>
      <div className="ml-[18px] w-[261px]"><T c={tc}>{children}</T></div>
      {keys && <div className={off ? "" : "text-[#555]"}><T c={kc || ""}>{keys}</T></div>}
      {arrow && <div className="ml-[148px]"><ChevR c="w-[12px] h-[20px] text-[#777]" /></div>}
    </div>
  );
}
const U = ({ children }: Kids) => <span className="underline decoration-1 underline-offset-[4px]">{children}</span>;
const MSep = () => <div className="mx-[2px] my-[4px] h-[2px] bg-[#959595]" />;

function ContextMenu() {
  return (
    <div className="absolute left-[1055px] top-[505px] flex h-[527px] w-[516px] flex-col border-2 border-[#cfcfcf] bg-white pt-[4px] text-[24px]">
      <Item tc="w-[87px]" arrow><U>M</U> Value</Item>
      <MSep />
      <Item tc="w-[117px]" icon={<Svg c="size-6" vb="0 0 24 24"><path d="M12 0v24M0 12h24" stroke="#68ab6a" strokeWidth="4" /></Svg>}><U>A</U>dd Vertex</Item>
      <MSep />
      <Item tc="w-[186px]" arrow><U>C</U>hange Segment</Item>
      <MSep />
      <Item tc="w-[186px]" icon={<Svg><path d="M3 15h26" stroke={G} strokeWidth="2" /><Node x={3} y={15} f="#c8502f" s={6} /><Node x={29} y={15} s={6} /><path d="M8 7h14M10 23h14" stroke="#57a7dc" strokeWidth="2" /><path d="M10 3v8L4 7zM22 19v8l6-4z" fill="#57a7dc" /></Svg>}><U>R</U>everse Direction</Item>
      <Item tc="w-[162px]" icon={<Svg><path d="M3 29l10-10" stroke={G} strokeWidth="2" /><path d="M13 19 29 3" stroke={G} strokeWidth="2" strokeDasharray="2 4" /><Node x={3} y={29} f="#c8502f" s={6} /><Node x={13} y={19} s={6} /><Node x={29} y={3} f="#c8502f" s={6} /></Svg>}>Change <U>L</U>ength</Item>
      <MSep />
      <Item tc="w-[40px]" arrow><U>P</U>art</Item>
      <MSep />
      <Item tc="w-[62px]" keys="F2" kc="w-[24px]" icon={<FinishIcon />}><U>F</U>inish</Item>
      <Item off tc="w-[109px]" keys="F4" kc="w-[24px]" icon={<Svg><path d="M3 13 13 3v10zM20 3h9v9h-9zM3 20h9v9H3z" stroke="#ccc" strokeWidth="2.400" />{[[3, 13], [13, 3], [13, 13], [20, 3], [29, 3], [20, 12], [3, 20], [12, 20], [3, 29]].map(([x, y]) => <Node key={x + "-" + y} x={x} y={y} f="#c4c4c4" s={6} />)}<path d="M14 30l3-8 11-10 4 4-11 11z" fill="#ddd" /></Svg>}>F<U>i</U>nish Part</Item>
      <Item tc="w-[70px]" keys="Ctrl+Delete" kc="w-[123px]" icon={<FinishIcon x />}>Ca<U>n</U>cel</Item>
    </div>
  );
}
const VS = ({ c }: { c: string }) => <div className={"h-[30px] w-[2px] shrink-0 bg-[#b5b5b5] " + c} />;

function MapStatus() {
  return (
    <div className="flex h-[51px] items-center border-b-2 border-[#d0d2d6] bg-[#f7f9f8] text-[24px] text-[#444]">
      <div className="ml-[10px] flex h-[43px] w-[200px] shrink-0 items-center border-2 border-[#959595] bg-white text-[#1c1c1c]"><T c="ml-[11px] w-[75px] pt-[2px]">1:3,022</T><div className="ml-[92px]"><Tri /></div></div>
      <VS c="ml-[8px]" />
      <div className="ml-[8px] flex size-10 shrink-0 items-center justify-center border-[3px] border-[#0a5f9c] bg-[#9acbee]"><SnapIcon c="size-[32px]" /></div>
      <Svg c="ml-[5px] size-[28px]" vb="0 0 28 28"><path d="M1 1h26v26H1zM1 7.500h26M1 14h26M1 20.500h26M7.500 1v26M14 1v26M20.500 1v26" stroke="#999" strokeWidth="1.800" /></Svg>
      <Svg c="ml-[11px] size-[34px]" vb="0 0 34 34"><path d="M6 30h26L22 10z" fill="#d3e8f6" /><path d="M6 30h26" stroke="#57a7dc" strokeWidth="2.400" /><path d="M6 17 16 6M5 10v8h7M16 10V5h-6" stroke="#57a7dc" strokeWidth="2.200" /><rect x="1" y="2" width="7" height="5" stroke={G} strokeWidth="1.800" /><rect x="24" y="17" width="8" height="5" stroke={G} strokeWidth="1.800" /><path d="M25 1v8M21 5h9" stroke={G} strokeWidth="2" /><rect x="1" y="26" width="6" height="6" fill="#5a985a" /></Svg>
      <Svg c="ml-[5px] size-[34px]" vb="0 0 34 34"><path d="M1 1h15v15H1z" fill="#d9ecd6" /><path d="M16 0v34M0 16h34" stroke={G} strokeWidth="2" strokeDasharray="3 2" /><Node x={16} y={16} f={G} s={8} /></Svg>
      <div className="ml-[6px]"><NArrow c="size-[34px]" /></div>
      <div className="ml-[11px]"><Chev c="w-[16px] h-[10px] text-[#222]" w={3} /></div>
      <VS c="ml-[18px]" />
      <T c="ml-[690px] w-[296px] pt-[4px]">74.0380688°W 5.1374263°N</T>
      <div className="ml-[22px]"><Chev c="w-[17px] h-[11px]" w={3} /></div>
      <VS c="ml-[691px]" />
      <div className="ml-[7px] flex h-10 w-[266px] shrink-0 items-center bg-white"><div className="ml-[6px]"><ZoomLayer /></div><T c="ml-[8px] w-[211px]">Selected Features: 1</T></div>
      <VS c="ml-[8px]" />
      <div className="ml-[17px]"><LayerBox c="size-[25px]" fill={false} /></div>
      <VS c="ml-[18px]" />
      <div className="ml-[16px] flex gap-[6px]"><div className="h-[28px] w-[8px] bg-[#666]" /><div className="h-[28px] w-[8px] bg-[#666]" /></div>
      <VS c="ml-[17px]" />
      <div className="ml-[12px]"><Refresh /></div>
    </div>
  );
}

/* ---------- attribute table ---------- */
function TablePane() {
  return (
    <div className="flex flex-col text-[24px] text-[#4a4a4a]">
      <div className="mt-[12px] flex h-[44px] items-center justify-between">
        <div className="flex h-[44px] w-[217px] items-center rounded-t-[7px] bg-[#d1d3d8]">
          <div className="ml-[12px]"><GridTable /></div><T c="ml-[12px] w-[107px] pt-[4px]">LineaPerfil</T><div className="ml-[20px]"><Close c="size-[20px] text-[#666]" /></div>
        </div>
        <div className="mr-[10px]"><Chev c="w-[16px] h-[10px]" w={2.800} /></div>
      </div>
      <div className="h-[6px] bg-[#d1d3d8]" />
      <div className="flex h-[451px] flex-col border-x-2 border-b-2 border-[#d3d5d8] bg-[#f7f9f8] px-[2px]">
        <div className="mt-[2px] flex h-[60px] shrink-0 items-center border-2 border-[#bfc1c6] bg-[#eeeff2] pt-[2px] text-[23px]">
          <T c="ml-[10px] w-[61px] font-bold">Field:</T>
          <div className="ml-[15px] opacity-45"><GridTable extra={<path d="M11 20v12M5 26h12" stroke="#555" strokeWidth="4" />} /></div><T c="ml-[7px] w-[43px] text-[#c4c4c4]">Add</T>
          <div className="ml-[19px]"><GridTable extra={<path d="M11 18h12v13H11z" fill="#fff" stroke="#555" strokeWidth="2.400" />} /></div><T c="ml-[8px] w-[97px]">Calculate</T>
          <div className="ml-[20px] h-[44px] w-[2px] bg-[#c8cacf]" />
          <T c="ml-[14px] w-[111px] font-bold">Selection:</T>
          <Svg c="ml-[16px] size-8"><path d="M1 1h20v12M1 1v19h12" stroke={G} strokeWidth="2" /><path d="M2 2h6c0 7 4 8 5 12v5H2z" fill="#b3e8f8" /><path d="M8 2c0 6 2 7 5 10l6-6" stroke={G} strokeWidth="1.600" /><rect x="14" y="14" width="17" height="17" fill="#fff" stroke={G} strokeWidth="2" /><path d="M15 15h15v4H15z" fill="#5fa9df" /><path d="M14 23h17M14 27h17M20 19v12M25 19v12" stroke={G} strokeWidth="1.600" /></Svg>
          <T c="ml-[6px] w-[208px]">Select By Attributes</T>
          <div className="ml-[20px]"><ZoomLayer rows /></div><T c="ml-[6px] w-[95px]">Zoom To</T>
          <Svg c="ml-[20px] size-8"><path d="M1 1h18v12H1zM1 5h18M1 9h18" fill="#e8f6fb" stroke={G} strokeWidth="1.800" /><path d="M13 18h18v13H13zM13 22h18M13 27h18" fill="#b3e8f8" stroke={G} strokeWidth="1.800" /><path d="M22 3c6 0 6 4 6 10M24 10l4 4 4-4M10 29c-5 0-6-4-6-10M1 22l4-4 4 4" stroke={G} strokeWidth="2" /></Svg>
          <T c="ml-[6px] w-[68px]">Switch</T>
          <div className="ml-[20px]"><TableRows /></div><T c="ml-[8px] w-[54px]">Clear</T>
          <div className="relative ml-[20px]"><TableRows sel={[2, 3]} /><div className="absolute -bottom-[4px] left-[3px] bg-white p-[1px]"><Close c="size-[13px] text-[#c9684a]" w={5} /></div></div><T c="ml-[8px] w-[70px]">Delete</T>
          <Svg c="ml-[20px] size-8"><path d="M7 1h24v18h-4M7 1v9M7 7h24" fill="#b3e8f8" stroke={G} strokeWidth="2" /><path d="M1 12h25v19H1z" fill="#b3e8f8" stroke={G} strokeWidth="2" /><path d="M1 18h25M1 25h25" stroke={G} strokeWidth="2" /></Svg>
          <T c="ml-[6px] w-[55px]">Copy</T>
          <div className="ml-auto mr-[15px] flex flex-col gap-[4px] pb-[4px]">{[0, 1, 2].map((i) => <div key={i} className="h-[6px] w-[28px] rounded-[2px] bg-[#555]" />)}</div>
        </div>
        <div className="mt-[2px] grid h-[332px] shrink-0 grid-cols-[1fr_48px] grid-rows-[1fr_48px] border-x-2 border-b-2 border-t-[3px] border-[#cbcbcb] bg-white text-[28px]">
          <div className="flex flex-col">
            <div className="flex h-[67px]">
              <div className="flex w-[46px] items-end justify-end border-b-2 border-[#ddd] pb-[9px] pr-[6px]"><Svg c="size-[27px]" vb="0 0 27 27"><path d="M27 0v27H0z" fill="#c8c8c8" /></Svg></div>
              <div className="flex w-[189px] items-center border-b-[6px] border-l-2 border-[#0079c1] border-l-[#ddd] bg-[#c8e2f5] pt-[6px]"><T c="ml-[10px] w-[165px] font-bold">OBJECTID *</T></div>
              <div className="flex w-[144px] items-center border-x-2 border-[#cbcbcb] bg-[#ebebeb] pt-[2px]"><T c="ml-[11px] w-[119px] font-bold">SHAPE *</T></div>
              <div className="flex w-[226px] items-center bg-[#ebebeb] pt-[2px]"><T c="ml-[12px] w-[201px] font-bold">Shape_Length</T></div>
            </div>
            <div className="flex h-[66px] w-[605px] border-b-2 border-t border-[#c8c8c8]">
              <div className="flex w-[46px] items-center border-r-[5px] border-[#0079c1] bg-[#c8e2f5]"><T c="ml-[14px] w-[12px]">1</T></div>
              <div className="flex w-[189px] items-center bg-[#c8e2f5]"><T c="ml-[13px] w-[32px]">17</T></div>
              <div className="flex w-[144px] items-center border-x-2 border-[#cbcbcb] bg-[#8cffff]"><T c="ml-[11px] w-[105px]">Polyline</T></div>
              <div className="flex w-[226px] items-center border-r-2 border-[#cbcbcb] bg-[#8cffff]"><T c="ml-[23px] w-[189px]">25562.183698</T></div>
            </div>
            <div className="flex h-[67px] w-[605px]">
              <div className="w-[46px] bg-[#ebebeb]" />
              <div className="flex flex-1 items-center border-b-2 border-l-2 border-r-2 border-[#c8c8c8] bg-[#ebebeb]"><T c="ml-[10px] w-[292px]">Click to add new row.</T></div>
            </div>
          </div>
          <div className="flex flex-col items-center justify-between bg-[#f4f4f4] py-[18px] text-[#c8c8c8]"><ChevUp c="w-[18px] h-[11px]" /><Chev c="w-[18px] h-[11px]" /></div>
          <div className="flex items-center justify-between bg-[#f4f4f4] px-[19px] text-[#c4c4c4]"><div className="rotate-180"><ChevR c="w-[11px] h-[18px]" /></div><ChevR c="w-[11px] h-[18px]" /></div>
          <div className="bg-[#ebebeb]" />
        </div>
        <div className="flex flex-1 items-center">
          <div className="flex h-[45px] w-[64px] shrink-0 items-center justify-center border-2 border-[#3fb0ee] bg-[#c2c4c8]"><TableRows sel={[1, 3]} /></div>
          <div className="-mt-[8px] ml-[19px]"><Svg c="w-[31px] h-[21px]" vb="0 0 31 21"><rect x="1" y="1" width="29" height="19" fill="#b3e8f8" stroke={G} strokeWidth="2" /><path d="M1 7h29M1 13.500h29" stroke={G} strokeWidth="2" /></Svg></div>
          <Svg c="ml-[35px] w-[18px] h-[18px]" vb="0 0 18 18"><path d="M1 0v18" stroke="#bbb" strokeWidth="2" /><path d="M18 0v18L4 9z" fill="#bbb" /></Svg>
          <Svg c="ml-[28px] w-[18px] h-[18px] rotate-180" vb="0 0 18 18"><path d="M1 0v18" stroke="#bbb" strokeWidth="2" /><path d="M18 0v18L4 9z" fill="#bbb" /></Svg>
          <T c="ml-[28px] w-[155px] pt-[3px]">1 of 1 selected</T>
          <T c="ml-auto w-[67px] pt-[3px]">Filters:</T>
          <div className="ml-[10px] flex h-[48px] w-[85px] items-center bg-[#eeeff2]">
            <Svg c="ml-[7px] size-8"><circle cx="16" cy="16" r="14" fill="#eaf0f5" stroke="#d0d3d6" strokeWidth="2" /><path d="M16 9v9h7" stroke="#b9c6d3" strokeWidth="2" /><path d="M18 6c8 3 9 12 5 18l-6-4z" fill="#dce9da" /></Svg>
            <Svg c="ml-[9px] size-8"><circle cx="16" cy="17" r="13" fill="#eaf0f5" stroke="#d0d3d6" strokeWidth="2" /><path d="M17 14c7 0 9 4 7 10l-6 2z" fill="#cfe2cc" /><path d="M1 10h19M5 5v10M10 2v10M16 5v10" stroke="#b9d5ea" strokeWidth="2" /></Svg>
          </div>
          <Svg c="ml-[6px] size-8"><path d="M1 2h26v3L17 16v14h-5V16L1 5z" fill="#999" stroke={G} strokeWidth="2" /><path d="M18 16h14v16H18z" fill="#f7f9f8" /><path d="M20 15v16M26 15v16M31 15v16" stroke="#57a7dc" strokeWidth="3.400" strokeDasharray="4 2.500" /></Svg>
          <VS c="ml-[5px]" />
          <Svg c="ml-[14px] w-[20px] h-[32px]" vb="0 0 20 32"><path d="M10 3v12M3 9l7-7 7 7" stroke="#b5d3b5" strokeWidth="4" /><path d="M10 17v12M3 23l7 7 7-7" stroke="#f2cfa6" strokeWidth="4" /></Svg>
          <div className="ml-[28px] h-[4px] w-[12px] bg-[#666]" />
          <div className="ml-[16px] flex items-center"><div className="h-[6px] w-[115px] bg-[#757575]" /><div className="h-[22px] w-[6px] bg-[#757575]" /><div className="h-[6px] w-[79px] bg-[#dcdcdc]" /></div>
          <Svg c="ml-[15px] size-[16px]" vb="0 0 16 16"><path d="M8 0v16M0 8h16" stroke="#666" strokeWidth="3.600" /></Svg>
          <div className="ml-[13px] flex h-[44px] w-[120px] items-center bg-white text-[#222]"><T c="ml-[13px] w-[65px] pt-[3px]">140 %</T><div className="ml-[22px]"><Tri /></div></div>
          <VS c="ml-[11px]" />
          <div className="ml-[13px] mr-[10px]"><Refresh /></div>
        </div>
      </div>
    </div>
  );
}

/* ---------- modify features pane ---------- */
const ROWS = [
  ["74.0642022", "4.9867757"], ["74.0639948", "4.9867864"], ["74.0638048", "4.9867645"], ["74.0637011", "4.9867645"], ["74.0635693", "4.9867419"], ["74.0635287", "4.9868232"],
  ["74.0634999", "4.9868978"], ["74.0634250", "4.9870007"], ["74.0633387", "4.9870459"], ["74.0631105", "4.9869950"], ["74.0628676", "4.9869040"],
];

function Modify() {
  return (
    <div className="ml-[12px] mt-[12px] flex h-[1748px] w-[580px] shrink-0 flex-col text-[24px] text-[#4a4a4a]">
      <div className="flex h-[1696px] flex-col rounded-t-[6px] border-2 border-[#d3d5d8] bg-[#f7f9f8]">
        <div className="mt-[12px] flex h-[40px] items-center">
          <T c="ml-[13px] w-[228px] text-[31px] text-[#1c1c1c]">Modify Features</T>
          <T c="ml-[198px] w-[15px] text-[26px] font-semibold">?</T>
          <div className="ml-[18px]"><Chev c="w-[16px] h-[10px]" /></div>
          <div className="ml-[20px]"><Pin /></div>
          <div className="ml-[18px]"><Close /></div>
        </div>
        <div className="mt-[14px] flex h-[37px] items-center text-[28px]">
          <Svg c="ml-[12px] size-[36px]" vb="0 0 36 36"><circle cx="18" cy="18" r="17" stroke={G} strokeWidth="2" /><path d="M28 18H10M18 9l-9 9 9 9" stroke={G} strokeWidth="3.400" /></Svg>
          <div className="ml-[141px]"><EditVerticesIcon c="size-[32px]" /></div>
          <T c="ml-[9px] w-[160px]">Edit Vertices</T>
        </div>
        <div className="mt-[35px] flex h-[52px] items-center">
          <div className="relative ml-[34px] h-[50px] w-[43px]"><div className="ml-[12px]"><LayerBox c="size-[31px]" /></div><Svg c="absolute left-0 top-[18px] w-[24px] h-[32px]" vb="0 0 24 32"><path d="M0 0v28l6-5 5 9 6-3-4-9h11z" fill="#555" /></Svg></div>
          <T c="ml-[15px] w-[232px] pt-[3px]">Change the selection.</T>
          <div className="ml-[217px]"><Chev c="w-[17px] h-[11px] text-[#222]" w={2.800} /></div>
        </div>
        <div className="ml-[10px] mt-[18px] flex h-[262px] w-[556px] shrink-0 flex-col border-2 border-[#e0e2e2] bg-[#fbfbfb]">
          <div className="mt-[5px] flex h-[36px] items-center"><div className="ml-[13px]"><Expand /></div><T c="ml-[16px] w-[143px] pt-[2px]">LineaPerfil (1)</T></div>
          <div className="flex h-[36px] items-center"><T c="ml-[80px] w-[148px] pt-[2px]">25562.183698</T></div>
        </div>
        <div className="ml-[10px] mt-[9px] flex h-[70px] w-[556px] shrink-0 items-center border-2 border-[#0079c1] bg-[#c8e2f5]"><div className="ml-[16px]"><EditVerticesIcon c="size-[46px]" /></div><T c="ml-[18px] w-[129px]">Edit Vertices</T></div>
        <div className="flex-1" />
        <div className="flex h-[24px] shrink-0 items-center justify-center gap-[8px] bg-[#ebebeb]">{[0, 1, 2].map((i) => <div key={i} className="size-[12px] rounded-full bg-[#949494]" />)}</div>
        <div className="flex h-[52px] shrink-0 items-center">
          <div className="ml-[20px]"><Close c="size-[20px] text-[#c9684a]" w={4} /></div>
          <div className="ml-[20px] h-full w-[2px] bg-[#c8cacc]" />
          <div className="ml-[13px]"><FinishIcon /></div>
          <div className="ml-auto mr-[10px]"><CopyIcon /></div>
        </div>
        <div className="flex h-[32px] shrink-0 items-center bg-[#ebebeb]">
          <div className="ml-[2px]"><Expand /></div><T c="ml-[25px] w-[14px] pt-[3px]">#</T><T c="ml-[31px] w-[156px] pt-[3px]">Longitude (dd)</T><T c="ml-[73px] w-[134px] pt-[3px]">Latitude (dd)</T>
          <div className="ml-auto h-full w-[34px] bg-white" />
        </div>
        <div className="flex h-[534px] shrink-0 overflow-hidden">
          <div className="w-[542px] shrink-0 border-r-2 border-[#ddd]">
            {ROWS.map((r, i) => (
              <div key={r[0]} className="grid h-[48px] grid-cols-[38px_2px_43px_2px_228px_2px_1fr] border-b-2 border-[#dcdcdc] bg-[#8cffff]">
                <div /><div className="bg-[#dcdcdc]" />
                <div className="flex items-center"><T c={i > 8 ? "ml-[6px] w-[26px] pt-[3px]" : "ml-[7px] w-[12px] pt-[3px]"}>{i + 1}</T></div><div className="bg-[#dcdcdc]" />
                <div className="flex items-center"><T c="ml-[5px] w-[152px] pt-[3px]">{r[0]}°W</T></div><div className="bg-[#dcdcdc]" />
                <div className="flex items-center"><T c="ml-[4px] w-[136px] pt-[3px]">{r[1]}°N</T></div>
              </div>
            ))}
            <div className="h-[10px] bg-[#8cffff]" />
          </div>
          <div className="flex flex-1 flex-col items-center bg-[#ebebeb] py-[13px]"><ChevUp c="w-[16px] h-[10px] text-[#555]" /><div className="mt-[15px] h-[42px] w-[18px] rounded-full bg-[#b0b0b0]" /><div className="mt-auto"><Chev c="w-[16px] h-[10px]" /></div></div>
        </div>
      </div>
      <div className="flex h-[42px] items-center">
        <T c="ml-[13px] w-[52px]">Cat...</T><T c="ml-[35px] w-[46px]">Ch...</T><T c="ml-[36px] w-[46px]">Ge...</T><T c="ml-[36px] w-[54px]">Cre...</T>
        <div className="-mt-[2px] ml-[16px] flex h-[43px] w-[82px] shrink-0 items-center rounded-b-[6px] border-2 border-t-0 border-[#d3d5d8] bg-[#f7f9f8] text-[#0079d0]"><T c="ml-[11px] w-[53px] pt-[2px]">Mo...</T></div>
        <T c="ml-[12px] w-[41px]">Sy...</T><T c="ml-[42px] w-[54px]">Lab...</T>
      </div>
    </div>
  );
}

/* Slivers of the windows that lie behind the application. */
function LeftEdge() {
  return (
    <div className="flex w-[13px] shrink-0 flex-col overflow-hidden bg-white">
      <div className="mt-[538px] flex h-[1032px] flex-col border-b-2 border-r-2 border-t-2 border-[#8cc63f] bg-[#f0f0f0] text-[20px]">
        <div className="h-[38px] bg-[#f3f2f1]" /><div className="h-[46px] border-b border-[#ccc] bg-white" />
        <div className="mt-[8px]"><ChevUp c="w-[8px] h-[6px] text-[#444]" /></div>
        <div className="mt-[496px] h-[126px] bg-[#c2c2c2]" />
        <div className="h-[44px] bg-white leading-[26px]">9</div>
        <div className="mt-[254px]"><Chev c="w-[8px] h-[6px]" /></div>
      </div>
    </div>
  );
}
function RightEdge() {
  return (
    <div className="flex w-[13px] shrink-0 flex-col overflow-hidden bg-white text-[14px] text-[#777]">
      <div className="mt-[525px] h-[23px] bg-[#eee] pl-[4px] pt-[3px]"><div className="h-[16px] w-[12px] border border-[#999] bg-gradient-to-b from-[#ddd] to-[#5fbf20]" /></div>
      <div className="h-[962px] border-l-[2px] border-[#111] bg-[#e3e1e1]">
        <div className="h-[20px] bg-white pl-[3px] text-[12px] leading-[20px] underline">F</div>
        <div className="h-[20px] bg-[#f6f6f6] pl-[3px]"><div className="h-[15px] w-[12px] border border-[#ccc] bg-white" /></div>
        <div className="h-[4px] bg-[#f2a33c]" />
        <div className="h-[20px] bg-[#f3eeee] pl-[3px]"><div className="h-[15px] w-[12px] bg-[#f05a5a]" /></div>
        <div className="h-[898px] border-l-2 border-t-2 border-[#777]" />
      </div>
      <div className="h-[18px] whitespace-nowrap border-b border-t border-[#aaa] bg-[#f0f0f0] pl-px text-[9px] leading-[16px] text-[#333]">No</div>
      <div className="h-[41px] bg-[#f0f0f0]" />
    </div>
  );
}

export default function App() {
  return (
    <div className="flex h-[2078px] w-[3866px] overflow-hidden bg-white font-['Open_Sans','Noto_Sans',sans-serif] leading-[1.300]">
      <LeftEdge />
      <div className="flex w-[3840px] shrink-0 flex-col bg-[#f7f9f8]">
        <TitleBar />
        <Tabs />
        <Ribbon />
        <div className="flex h-[1762px] shrink-0 overflow-hidden border-t-2 border-[#c3c4c9] bg-[#ebebeb]">
          <Contents />
          <div className="ml-[12px] flex w-[2650px] shrink-0 flex-col">
            <div className="mt-[12px] flex h-[44px] items-center justify-between">
              <div className="flex h-[44px] w-[226px] items-center rounded-t-[7px] bg-[#0079d0] pt-[3px] text-[24px] text-white"><div className="ml-[11px]"><MapThumb /></div><T c="ml-[12px] w-[118px]">DEMProfile</T><div className="ml-[19px]"><Close c="size-[20px] text-white" w={1.600} /></div></div>
              <div className="mr-[10px] pt-[2px]"><Chev c="w-[16px] h-[10px]" w={2.400} /></div>
            </div>
            <div className="h-[4px] bg-[#0079d0]" />
            <div className="relative border-x-2 border-t-2 border-[#cfd1d4]">
              <MapCanvas />
              <ContextMenu />
              <MapStatus />
            </div>
            <TablePane />
          </div>
          <Modify />
        </div>
        <div className="flex h-[13px] shrink-0 items-end border-t-2 border-[#bcbcbc] bg-[#efefef]"><div className="ml-[1972px] h-[5px] w-[74px] rounded-t bg-[#f8f8f8]" /></div>
      </div>
      <RightEdge />
    </div>
  );
}
